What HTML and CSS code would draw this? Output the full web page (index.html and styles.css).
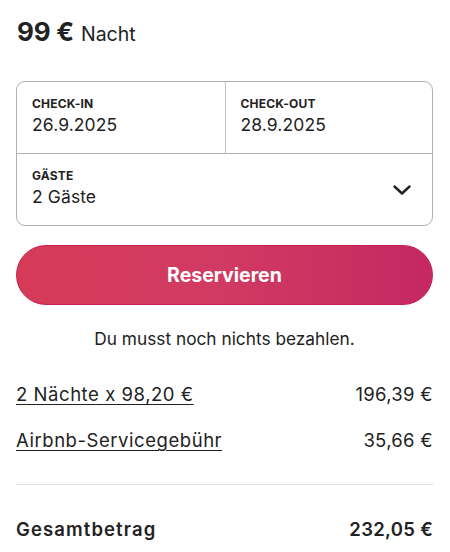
FILE: index.html
```html
<!DOCTYPE html>
<html lang="de">
<head>
<meta charset="utf-8">
<link rel="stylesheet" href="styles.css">
</head>
<body>
<div class="card">
  <div class="price"><span class="amount">99 €</span> <span class="unit">Nacht</span></div>
  <div class="picker">
    <div class="dates">
      <div class="field">
        <div class="label">CHECK-IN</div>
        <div class="value">26.9.2025</div>
      </div>
      <div class="field field-right">
        <div class="label">CHECK-OUT</div>
        <div class="value">28.9.2025</div>
      </div>
    </div>
    <div class="guests">
      <div class="field">
        <div class="label">GÄSTE</div>
        <div class="value">2 Gäste</div>
      </div>
      <svg class="chevron" width="18" height="10" viewBox="0 0 18 10"><path d="M1.5 1.5 L9 8.5 L16.5 1.5" fill="none" stroke="#222" stroke-width="2.4" stroke-linecap="round" stroke-linejoin="round"/></svg>
    </div>
  </div>
  <button class="reserve">Reservieren</button>
  <p class="note">Du musst noch nichts bezahlen.</p>
  <div class="rows">
    <div class="row"><span class="link">2 Nächte x 98,20 €</span><span>196,39 €</span></div>
    <div class="row"><span class="link">Airbnb-Servicegebühr</span><span>35,66 €</span></div>
  </div>
  <div class="total"><span class="total-label">Gesamtbetrag</span><span>232,05 €</span></div>
</div>
</body>
</html>
```
FILE: styles.css
```css
html, body {
  margin: 0;
  padding: 0;
  background: #fff;
}
body {
  font-family: Inter, "Noto Sans", sans-serif;
  color: #222;
}
.card {
  padding: 16px 17px 0 16px;
  display: flex;
  flex-direction: column;
}
.price {
  display: flex;
  align-items: baseline;
  gap: 7px;
  height: 32px;
  line-height: 32px;
  padding-left: 1px;
}
.amount {
  font-size: 26px;
  font-weight: 700;
  letter-spacing: -0.2px;
}
.unit {
  font-size: 19.5px;
  font-weight: 400;
}
.picker {
  margin-top: 33px;
  border: 1px solid #b0b0b0;
  border-radius: 9px;
  display: flex;
  flex-direction: column;
}
.dates {
  display: grid;
  grid-template-columns: 1fr 1fr;
  border-bottom: 1px solid #b0b0b0;
  height: 71px;
}
.field {
  padding: 15px 15px 0 15px;
}
.field-right {
  border-left: 1px solid #c4c4c4;
}
.label {
  font-size: 12px;
  font-weight: 700;
  letter-spacing: 0.2px;
  line-height: 14px;
}
.value {
  margin-top: 4px;
  font-size: 17.5px;
  line-height: 20px;
  letter-spacing: 0.1px;
}
.guests {
  display: flex;
  align-items: center;
  justify-content: space-between;
  height: 71px;
}
.guests .field {
  padding-top: 0;
  margin-top: -3px;
}
.chevron {
  margin-right: 21px;
  margin-top: 0;
}
.reserve {
  margin-top: 19px;
  height: 60px;
  border: 1px solid #c51f4c;
  border-radius: 30px;
  background: linear-gradient(90deg, #d63a59 0%, #d13a62 50%, #c52862 100%);
  color: #fff;
  font-family: Inter, "Noto Sans", sans-serif;
  font-size: 19.5px;
  font-weight: 700;
  padding: 0;
}
.note {
  margin: 23px 0 0 0;
  text-align: center;
  font-size: 17.3px;
  line-height: 22px;
}
.rows {
  margin-top: 32px;
  display: flex;
  flex-direction: column;
  gap: 22px;
  padding-bottom: 32px;
  border-bottom: 1px solid #ddd;
}
.row {
  display: flex;
  justify-content: space-between;
  font-size: 18.5px;
  line-height: 24px;
  letter-spacing: 0.3px;
}
.link {
  text-decoration: underline;
  text-underline-offset: 3px;
  text-decoration-thickness: 1px;
  letter-spacing: 0.55px;
}
.total {
  margin-top: 32px;
  display: flex;
  justify-content: space-between;
  font-size: 18.5px;
  font-weight: 600;
  line-height: 24px;
  letter-spacing: 0.3px;
}
.total-label {
  letter-spacing: 1.1px;
}
```
